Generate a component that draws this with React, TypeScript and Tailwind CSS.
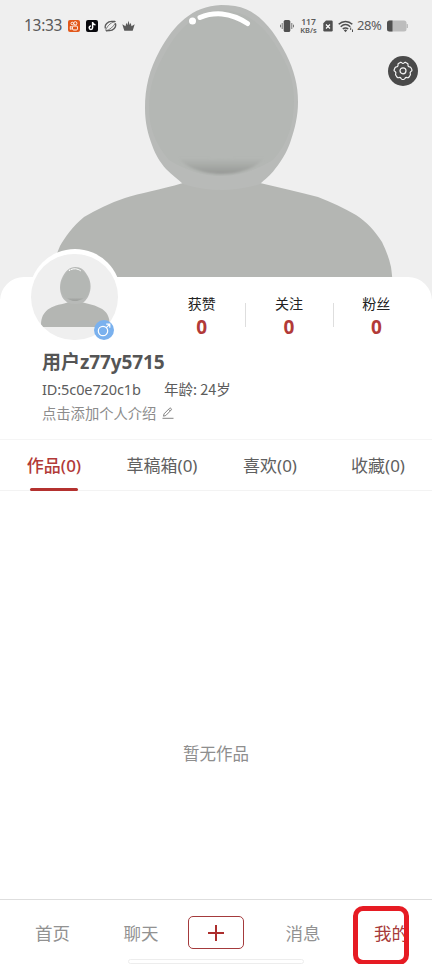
import { clsx } from "clsx";

type Stat = { label: string; value: number };
type Tab = { label: string; count: number; active?: boolean };

const stats: Stat[] = [
  { label: "获赞", value: 0 },
  { label: "关注", value: 0 },
  { label: "粉丝", value: 0 },
];

const tabs: Tab[] = [
  { label: "作品", count: 0, active: true },
  { label: "草稿箱", count: 0 },
  { label: "喜欢", count: 0 },
  { label: "收藏", count: 0 },
];

function Silhouette({ id, className }: { id: string; className?: string }) {
  return (
    <svg viewBox="0 0 432 310" className={className}>
      <defs>
        <linearGradient id={`${id}-chin`} x1="0" y1="0" x2="0" y2="1">
          <stop offset="0.35" stopColor="#9c9e9b" stopOpacity="0" />
          <stop offset="1" stopColor="#969895" />
        </linearGradient>
        <filter id={`${id}-soft`}>
          <feGaussianBlur stdDeviation="1.2" />
        </filter>
      </defs>
      <path
        d="M183 183C160 190 140 193 125 198C110 203 96 210 84 217C73 226 65 237 60 246C54 260 50 274 50 292Q50 305 64 305H380Q393 305 393 292C393 284 392 274 391 267C389 258 386 250 382 242C375 231 367 222 356 215C344 208 331 202 318 197C300 192 280 188 260 183Z"
        fill="#b4b6b3"
      />
      <path
        d="M221 5C192 6 174 25 160 50C149 70 145 88 145 108C145 123 148 134 152 145C156 156 160 162 166 169C172 175 178 179 183 184Q221 196 260 184C265 179 270 176 275 169C284 158 288 149 291 140C295 128 298 116 298 102C298 85 294 70 286 54C275 33 260 10 235 6Q228 5 221 5Z"
        fill="#b8bab8"
      />
      <path
        d="M221 10C194 12 177 31 165 53C153 74 149 89 149 108C149 125 154 143 169 160Q221 192 273 160C288 144 294 122 294 102C294 84 290 70 282 56C269 32 253 11 221 10Z"
        fill="#b4b7b4"
      />
      <path
        d="M175 149Q222 169 268 149C268 162 246 174 222 174C198 174 177 164 175 149Z"
        fill={`url(#${id}-chin)`}
        filter={`url(#${id}-soft)`}
      />
      <circle cx="192.500" cy="21" r="3.500" fill="#fff" />
      <path
        d="M200 17.500C207 14.500 215 13.500 222 14C232 15 240 18.500 247.500 23.500"
        fill="none"
        stroke="#fff"
        strokeWidth="5"
        strokeLinecap="round"
      />
    </svg>
  );
}

function StatusBar() {
  return (
    <div className="relative flex h-[52px] items-center pl-6 text-[#5a5a5a]">
      <span className="w-[44px] font-['Noto_Sans',sans-serif] text-[15.500px] tracking-[-0.3px]">13:33</span>
      <svg viewBox="0 0 12 12" className="h-3 w-3" fill="none" stroke="#fff">
        <rect width="12" height="12" rx="2" fill="#e2581b" stroke="none" />
        <circle cx="4.300" cy="3.500" r="1.300" strokeWidth="0.900" />
        <circle cx="7.300" cy="3.300" r="1.600" strokeWidth="0.900" />
        <rect x="4.500" y="6" width="5" height="4" rx="1.200" strokeWidth="1" />
        <path d="M4.500 7.200L2.300 6.500V9.300L4.500 8.600" strokeWidth="0.900" />
      </svg>
      <svg viewBox="0 0 12 12" className="ml-1.5 h-3 w-3" fill="none">
        <rect width="12" height="12" rx="2" fill="#08080c" />
        <path d="M6.600 2V7.700A1.700 1.700 0 1 1 4.900 6M6.600 2.300C7 4 8 4.700 9.500 4.700" stroke="#fff" strokeWidth="1.500" />
      </svg>
      <svg viewBox="0 0 13 12" className="ml-1.5 h-3 w-[13px]" fill="none" stroke="#5a5a5a">
        <path d="M1.500 8.500C0 5 4 1 8 1.300L11 1.500M11.300 3.200C13 7 9 11 5 10.700L2 10.800" strokeWidth="1.300" />
        <path d="M11.800 1.500C8 1.800 3.500 5 1.500 10.500M11.300 3.200C9 7 6 9.700 2 10.800" strokeWidth="0.800" />
      </svg>
      <svg viewBox="0 0 13 12" className="ml-[5px] h-3 w-[13px]" fill="#5a5a5a">
        <path d="M2.300 10.800L0.300 4.200L3.500 6.200L4.300 2.800L5.400 5L6.500 0.800L7.600 5L8.700 2.800L9.500 6.200L12.700 4.200L10.700 10.800Z" />
      </svg>

      <svg viewBox="0 0 14 14" className="ml-auto h-[14px] w-[14px]" fill="#505050">
        <rect x="3.700" y="1" width="6.600" height="12" rx="1.600" />
        <path d="M2.200 4V10M0.500 5.700V8.300M11.800 4V10M13.500 5.700V8.300" stroke="#777" strokeWidth="1" />
      </svg>
      <div className="ml-[5px] w-[19px] text-center font-['Noto_Sans',sans-serif] text-[7.500px] leading-[8px] font-semibold">
        <div className="text-[8.500px]">117</div>
        <div className="whitespace-nowrap">KB/s</div>
      </div>
      <svg viewBox="0 0 10 12" className="ml-[5px] h-3 w-[10px]">
        <path d="M3 0.500H8.500Q9.700 0.500 9.700 1.700V10.300Q9.700 11.500 8.500 11.500H1.500Q0.300 11.500 0.300 10.300V3.200Z" fill="#505050" />
        <path d="M3 4.500L7 8.500M7 4.500L3 8.500" stroke="#fff" strokeWidth="1.200" />
      </svg>
      <svg viewBox="0 0 16 13" className="ml-[5px] h-[13px] w-4" fill="none" stroke="#505050" strokeWidth="1.500">
        <path d="M0.700 4.300C4.700 0.400 10.300 0.400 14.300 4.300M2.700 6.700C5.600 4 9.400 4 12.300 6.700M4.800 9C6.300 7.500 8.700 7.500 10.200 9" />
        <path d="M5.800 10.200L7.500 12.200L9.200 10.200Q7.500 9 5.800 10.200Z" fill="#505050" stroke="none" />
        <path d="M12.700 7.500V10M14.500 9.500V12" strokeWidth="1" />
      </svg>
      <span className="ml-[3px] w-[28px] font-['Noto_Sans',sans-serif] text-[13px] tracking-[-0.400px]">28%</span>
      <svg viewBox="0 0 21 12" className="mr-6 ml-[2px] h-3 w-[21px]">
        <rect y="0.500" width="19.500" height="11" rx="2.500" fill="#bdbdbd" />
        <path d="M2.500 0.500H5.500V11.500H2.500Q0 11.500 0 9V3Q0 0.500 2.500 0.500Z" fill="#505050" />
        <rect x="19.500" y="4" width="1.500" height="4" rx="0.500" fill="#bdbdbd" />
      </svg>
    </div>
  );
}

function SettingsButton() {
  return (
    <button className="mt-1 mr-[14px] ml-auto flex h-[30px] w-[30px] items-center justify-center rounded-full bg-[#4a4a4a]">
      <svg viewBox="0 0 20 20" className="h-5 w-5" fill="none" stroke="#f5f5f5" strokeWidth="1.200" strokeLinejoin="round">
        <path d="M7.300 1.400Q8.300 1 8.800 1.800Q10 3 11.200 1.800Q11.700 1 12.700 1.400L14.500 2.500Q15.200 3 15 3.900Q14.800 5.700 16.700 5.900Q17.700 6 18 6.800Q18.900 8.200 19 9.300Q19 10 17.900 10.500Q16.700 11.300 17.300 12.700Q17.700 13.800 17 14.500L15.800 16.300Q15 17 14 16.600Q12.700 16.100 12 17.400Q11.600 18.500 10.500 18.500H9.300Q8.400 18.500 8 17.400Q7.300 16.100 6 16.600Q5 17 4.200 16.300L3 14.500Q2.300 13.800 2.700 12.700Q3.300 11.300 2.100 10.500Q1 10 1 9.300L2 6.800Q2.300 6 3.300 5.900Q5.200 5.700 5 3.900Q4.800 3 5.500 2.500Z" />
        <circle cx="10" cy="9.800" r="3" />
      </svg>
    </button>
  );
}

function Avatar() {
  return (
    <div className="absolute -top-[28px] left-[29px] h-[92px] w-[92px] rounded-full bg-white">
      <div className="mt-[5px] ml-[2px] h-[86px] w-[87px] overflow-hidden rounded-full bg-[#efefef] pt-[12px]">
        <Silhouette id="avatar" className="h-[62px] w-[86.400px]" />
      </div>
      <div className="absolute top-[71px] left-[65px] flex h-[20px] w-[20px] items-center justify-center rounded-full bg-[#7ab1ee]">
        <svg viewBox="0 0 14 14" className="h-[14px] w-[14px]" fill="none" stroke="#fff" strokeWidth="1.200">
          <circle cx="6" cy="8" r="4.700" />
          <path d="M9.300 4.700L12.800 1.200M9.200 1.200H12.800V4.800" />
        </svg>
      </div>
    </div>
  );
}

function ProfileHeader() {
  return (
    <section className="relative -mt-[22px] h-[163px] rounded-t-[24px] border-b border-[#f5f5f5] bg-white">
      <Avatar />
      <div className="ml-[158px] flex h-[72px] w-[262px] pt-4">
        {stats.map((stat, index) => (
          <div key={stat.label} className="relative flex-1 text-center">
            {index > 0 && <span className="absolute top-[10px] left-0 h-6 w-px bg-[#dedede]" />}
            <p className="text-[14px] leading-5 text-[#222]">{stat.label}</p>
            <p className="font-['Noto_Sans',sans-serif] text-[19px] leading-7 font-bold text-[#b23a38]">{stat.value}</p>
          </div>
        ))}
      </div>
      <div className="pl-[42px]">
        <h1 className="text-[19px] leading-6 font-bold text-[#555]">
          用户<span className="font-['Noto_Sans',sans-serif] tracking-[-0.100px]">z77y5715</span>
        </h1>
        <div className="mt-[3px] flex text-[14.500px] leading-6 whitespace-nowrap text-[#5c5c5c]">
          <span className="w-[122px] font-['Noto_Sans',sans-serif] tracking-[-0.100px]">ID:5c0e720c1b</span>
          <span>年龄: 24岁</span>
        </div>
        <div className="flex items-center text-[14.300px] leading-6 text-[#8c8c8c]">
          点击添加个人介绍
          <svg viewBox="0 0 12 12" className="ml-[6px] h-3 w-3" fill="none" stroke="#777" strokeWidth="0.900">
            <path d="M1.500 9.200L2 6.900L7.500 1.300Q8.200 0.600 9 1.400Q9.900 2.200 9.200 3L3.800 8.500ZM6.600 2.300L8.300 4M0.500 11.300H11.500" />
          </svg>
        </div>
      </div>
    </section>
  );
}

function BottomNav() {
  return (
    <nav className="relative grid h-[65px] shrink-0 grid-cols-[93px_84px_78px_84px_93px] border-t border-[#dedede] pt-[16px] pl-[6px] text-center text-[17.500px] leading-[34px] text-[#929292]">
      <span>首页</span>
      <span>聊天</span>
      <button className="mt-0 ml-[5px] flex h-[33px] w-[56px] items-center justify-center rounded-[5px] border border-[#a43a3c]">
        <svg viewBox="0 0 18 18" className="h-[18px] w-[18px]" stroke="#ac2e2d" strokeWidth="2">
          <path d="M1 9H17M9 1V17" />
        </svg>
      </button>
      <span>消息</span>
      <span className="text-[#a73b3a]">我的</span>
      <div className="absolute top-[59px] left-[128px] h-[5px] w-[176px] rounded-full border border-[#ededed] bg-white" />
      <div className="absolute top-[6px] left-[353px] h-[59px] w-[56px] rounded-[10px] border-[5px] border-[#e61b23]" />
    </nav>
  );
}

export default function App() {
  return (
    <main className="flex h-[964px] w-[432px] flex-col overflow-hidden bg-white font-['Noto_Sans_CJK_SC',sans-serif]">
      <header className="relative h-[299px] shrink-0 overflow-hidden bg-[#efefef]">
        <Silhouette id="cover" className="absolute top-0 left-0 h-[310px] w-[432px]" />
        <StatusBar />
        <SettingsButton />
      </header>
      <ProfileHeader />
      <div className="flex h-[51px] shrink-0 border-b border-[#f3f3f3]">
        {tabs.map((tab) => (
          <div
            key={tab.label}
            className={clsx(
              "flex flex-1 flex-col items-center text-[17px] leading-[50px] whitespace-nowrap",
              tab.active ? "font-medium text-[#b23a38]" : "text-[#606060]",
            )}
          >
            <span className="h-[48px]">
              {tab.label}
              <span className="font-['Noto_Sans',sans-serif]">({tab.count})</span>
            </span>
            {tab.active && <span className="h-[3px] w-12 shrink-0 rounded-full bg-[#b4312f]" />}
          </div>
        ))}
      </div>
      <div className="flex flex-1 justify-center pt-[248px] text-[16.500px] leading-7 text-[#8e8e8e]">暂无作品</div>
      <BottomNav />
    </main>
  );
}
